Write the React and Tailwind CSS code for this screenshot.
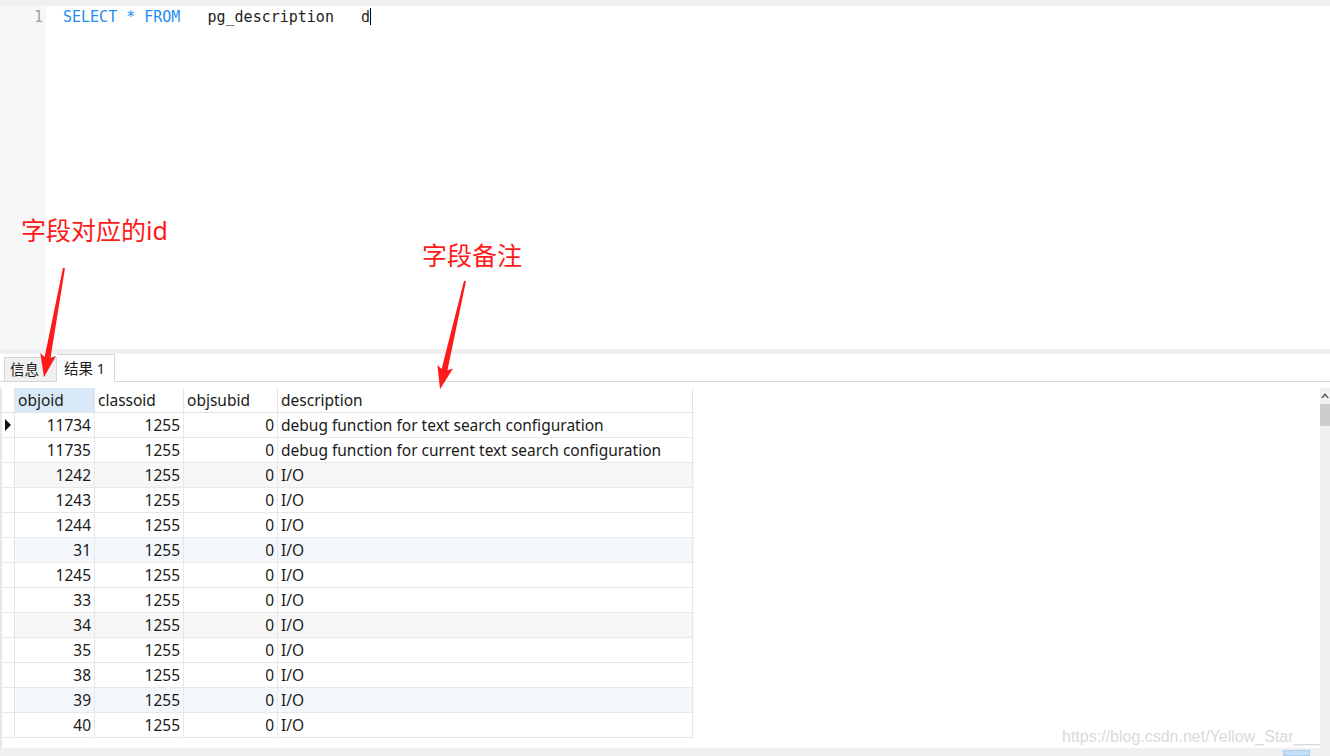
import React from "react";

const rows = [
  ["11734", "1255", "0", "debug function for text search configuration", "bg-white"],
  ["11735", "1255", "0", "debug function for current text search configuration", "bg-white"],
  ["1242", "1255", "0", "I/O", "bg-[#f7f7f7]"],
  ["1243", "1255", "0", "I/O", "bg-white"],
  ["1244", "1255", "0", "I/O", "bg-white"],
  ["31", "1255", "0", "I/O", "bg-[#f4f8fc]"],
  ["1245", "1255", "0", "I/O", "bg-white"],
  ["33", "1255", "0", "I/O", "bg-white"],
  ["34", "1255", "0", "I/O", "bg-[#f7f7f7]"],
  ["35", "1255", "0", "I/O", "bg-white"],
  ["38", "1255", "0", "I/O", "bg-white"],
  ["39", "1255", "0", "I/O", "bg-[#f4f8fc]"],
  ["40", "1255", "0", "I/O", "bg-white"],
];

function Arrow({ x, y, angle, len }) {
  const L = len;
  const pts = `-1,0 1,0 3,${L - 20} 8,${L - 23} 0,${L} -8,${L - 23} -3,${L - 20}`;
  return (
    <polygon
      points={pts}
      fill="#ff1a1a"
      transform={`translate(${x},${y}) rotate(${angle})`}
    />
  );
}

export default function App() {
  const font = { fontFamily: '"Noto Sans", "Noto Sans CJK SC", sans-serif' };
  return (
    <div
      className="relative w-[1330px] h-[756px] overflow-hidden bg-white flex flex-col text-[#1a1a1a]"
      style={font}
    >
      {/* top strip */}
      <div className="h-[6px] bg-[#f0f0f0] shrink-0" />
      {/* editor */}
      <div className="flex h-[343px] shrink-0">
        <div className="w-[46px] bg-[#f7f7f7] flex justify-end pr-[3px] pt-[1px] text-[15px] leading-[20px] text-[#a0a0a0] font-['DejaVu_Sans_Mono',monospace]">
          1
        </div>
        <div className="flex-1 pl-[17px] pt-[1px] text-[15px] leading-[20px] font-['DejaVu_Sans_Mono',monospace] whitespace-pre">
          <span className="text-[#1e8ef0]">SELECT * FROM</span>
          <span className="text-[#222]">   pg_description   d</span>
          <span className="inline-block w-[1px] h-[17px] bg-black align-[-3px]" />
        </div>
      </div>
      {/* splitter */}
      <div className="h-[5px] bg-[#f0f0f0] shrink-0" />
      {/* tab bar */}
      <div className="h-[28px] shrink-0 flex items-end pl-[4px] border-b border-[#d6d6d6] text-[14.5px]">
        <div className="h-[24px] w-[53px] bg-[#f0f0f0] border border-b-0 border-[#d6d6d6] flex items-center pl-[5px]">
          信息
        </div>
        <div className="h-[28px] w-[58px] bg-white border border-b-0 border-l-0 border-[#d6d6d6] -mb-[1px] flex items-center pl-[7px]">
          结果 1
        </div>
      </div>
      {/* grid area */}
      <div className="flex flex-1 pt-[6px] min-h-0">
        <div className="flex-1 min-w-0 border-l-[2px] border-[#e8e8e8]">
          <div className="flex flex-col text-[15.5px] leading-[24px] w-[692px]">
            <div className="flex h-[25px] border-b border-[#e4e4e4]">
              <div className="w-[13px] border-r border-[#e4e4e4]" />
              <div className="w-[80px] bg-[#d9e9f7] border-r border-[#e4e4e4] pl-[3px]">objoid</div>
              <div className="w-[89px] border-r border-[#e4e4e4] pl-[3px]">classoid</div>
              <div className="w-[94px] border-r border-[#e4e4e4] pl-[3px]">objsubid</div>
              <div className="w-[415px] border-r border-[#e4e4e4] pl-[3px]">description</div>
            </div>
            {rows.map((r, i) => (
              <div key={i} className={`flex h-[25px] border-b border-[#e8e8e8] ${r[4]}`}>
                <div className="w-[13px] border-r border-[#e4e4e4] bg-white flex items-center justify-center">
                  {i === 0 && (
                    <svg width="6" height="12" viewBox="0 0 6 12">
                      <polygon points="0,0 6,6 0,12" fill="#111" />
                    </svg>
                  )}
                </div>
                <div className="w-[80px] border-r border-[#e8e8e8] text-right pr-[3px]">{r[0]}</div>
                <div className="w-[89px] border-r border-[#e8e8e8] text-right pr-[3px]">{r[1]}</div>
                <div className="w-[94px] border-r border-[#e8e8e8] text-right pr-[3px]">{r[2]}</div>
                <div className="w-[415px] border-r border-[#e8e8e8] pl-[3px] whitespace-nowrap">{r[3]}</div>
              </div>
            ))}
          </div>
        </div>
        {/* vertical scrollbar */}
        <div className="w-[10px] bg-[#f0f0f0] flex flex-col items-center pt-[4px]">
          <svg width="8" height="6" viewBox="0 0 8 6">
            <polygon points="0,6 4,1 8,6 6,6 4,3.5 2,6" fill="#606060" />
          </svg>
          <div className="mt-[6px] w-[10px] h-[22px] bg-[#cdcdcd]" />
        </div>
      </div>
      {/* bottom scrollbar */}
      <div className="h-[8px] bg-[#f0f0f0] shrink-0 flex justify-end pr-[20px] items-end">
        <div className="w-[27px] h-[6px] bg-[#c5def5] border border-[#a9cdee]" />
      </div>

      {/* watermark */}
      <div className="absolute left-[1062px] top-[726px] text-[16px] leading-[22px] whitespace-nowrap text-[#dadada] font-['Liberation_Sans',sans-serif]">
        https://blog.csdn.net/Yellow_Star___
      </div>

      {/* annotations */}
      <div className="absolute left-[21px] top-[213px] text-[25px] leading-[34px] text-[#ff1a1a]">
        字段对应的id
      </div>
      <div className="absolute left-[422px] top-[238px] text-[25px] leading-[34px] text-[#ff1a1a]">
        字段备注
      </div>
      <svg className="absolute left-0 top-0 pointer-events-none" width="1330" height="756">
        <Arrow x={64} y={268} angle={10.4} len={111} />
        <Arrow x={465} y={281} angle={13} len={111} />
      </svg>
    </div>
  );
}
